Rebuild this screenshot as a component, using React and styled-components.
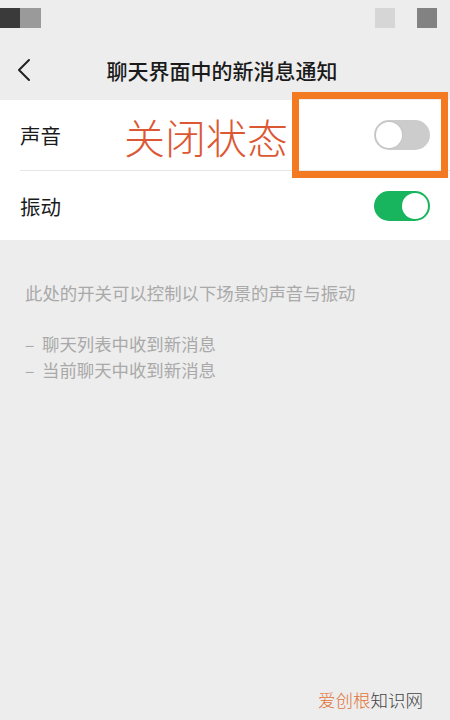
import React from 'react'
import styled, { createGlobalStyle } from 'styled-components'

const Global = createGlobalStyle`
  html, body {
    margin: 0;
    padding: 0;
    background: #ededed;
  }
  body {
    font-family: "Noto Sans CJK SC", "Noto Sans", sans-serif;
  }
`

const Screen = styled.div`
  position: relative;
  width: 450px;
  height: 720px;
  overflow: hidden;
  background: #ededed;
`

const StatusBar = styled.div`
  height: 40px;
  display: flex;
  align-items: flex-start;
  justify-content: space-between;
  padding-top: 8px;
  box-sizing: border-box;
`

const BlockGroup = styled.div`
  display: flex;
  gap: ${p => p.gap || 0}px;
  padding-right: ${p => p.right || 0}px;
`

const Block = styled.div`
  width: ${p => p.w || 20}px;
  height: 20px;
  background: ${p => p.color};
`

const NavBar = styled.div`
  height: 60px;
  display: flex;
  align-items: center;
`

const Back = styled.div`
  width: 50px;
  display: flex;
  align-items: center;
  padding-left: 16px;
  box-sizing: border-box;
`

const Title = styled.div`
  flex: 1;
  text-align: center;
  margin-right: 56px;
  font-size: 21px;
  font-weight: 500;
  color: #1a1a1a;
`

const Card = styled.div`
  background: #fff;
`

const Row = styled.div`
  height: 70px;
  display: flex;
  align-items: center;
  justify-content: space-between;
  margin-left: 20px;
  padding-right: 20px;
  border-top: ${p => (p.divider ? '1px solid #e6e6e6' : 'none')};
  box-sizing: border-box;
`

const Label = styled.div`
  font-size: 20.5px;
  color: #1a1a1a;
`

const Toggle = styled.div`
  width: 56px;
  height: 30px;
  border-radius: 15px;
  background: ${p => (p.on ? '#18b45e' : '#cccccc')};
  position: relative;
  flex-shrink: 0;
  &::after {
    content: '';
    position: absolute;
    top: 2px;
    left: ${p => (p.on ? '28px' : '2px')};
    width: 26px;
    height: 26px;
    border-radius: 50%;
    background: #fff;
    box-shadow: 0 0 0 ${p => (p.on ? '0' : '1px')} #c4c4c4;
  }
`

const Notes = styled.div`
  padding: 40px 25px 0;
  font-size: 17.4px;
  line-height: 26px;
  color: #a9a9a9;
`

const NoteLine = styled.div`
  margin-top: ${p => p.gap || 0}px;
`

const Dash = styled.span`
  display: inline-block;
  width: 17px;
`

const Annotation = styled.div`
  position: absolute;
  left: 124px;
  top: 111px;
  font-size: 41px;
  line-height: 50px;
  color: #dc5834;
  font-weight: 300;
`

const Highlight = styled.div`
  position: absolute;
  left: 292px;
  top: 92px;
  width: 156px;
  height: 86px;
  border: 7px solid #f47a22;
  box-sizing: border-box;
`

const Watermark = styled.div`
  position: absolute;
  left: 318px;
  top: 688px;
  font-size: 17.5px;
  line-height: 24px;
  color: #444;
  font-weight: 300;
`

const Brand = styled.span`
  color: #e0743a;
`

export default function App() {
  return (
    <Screen>
      <Global />
      <StatusBar>
        <BlockGroup>
          <Block color="#3a3a3a" />
          <Block color="#9a9a9a" w={21} />
        </BlockGroup>
        <BlockGroup gap={22} right={13}>
          <Block color="#d6d6d6" />
          <Block color="#828282" />
        </BlockGroup>
      </StatusBar>
      <NavBar>
        <Back>
          <svg width="16" height="24" viewBox="0 0 16 24">
            <path d="M13 2 L3 12 L13 22" fill="none" stroke="#222" strokeWidth="2" strokeLinecap="round" strokeLinejoin="round" />
          </svg>
        </Back>
        <Title>聊天界面中的新消息通知</Title>
      </NavBar>
      <Card>
        <Row>
          <Label>声音</Label>
          <Toggle />
        </Row>
        <Row divider>
          <Label>振动</Label>
          <Toggle on />
        </Row>
      </Card>
      <Notes>
        <NoteLine>此处的开关可以控制以下场景的声音与振动</NoteLine>
        <NoteLine gap={25}><Dash>–</Dash>聊天列表中收到新消息</NoteLine>
        <NoteLine><Dash>–</Dash>当前聊天中收到新消息</NoteLine>
      </Notes>
      <Annotation>关闭状态</Annotation>
      <Highlight />
      <Watermark>
        <Brand>爱创根</Brand>知识网
      </Watermark>
    </Screen>
  )
}
